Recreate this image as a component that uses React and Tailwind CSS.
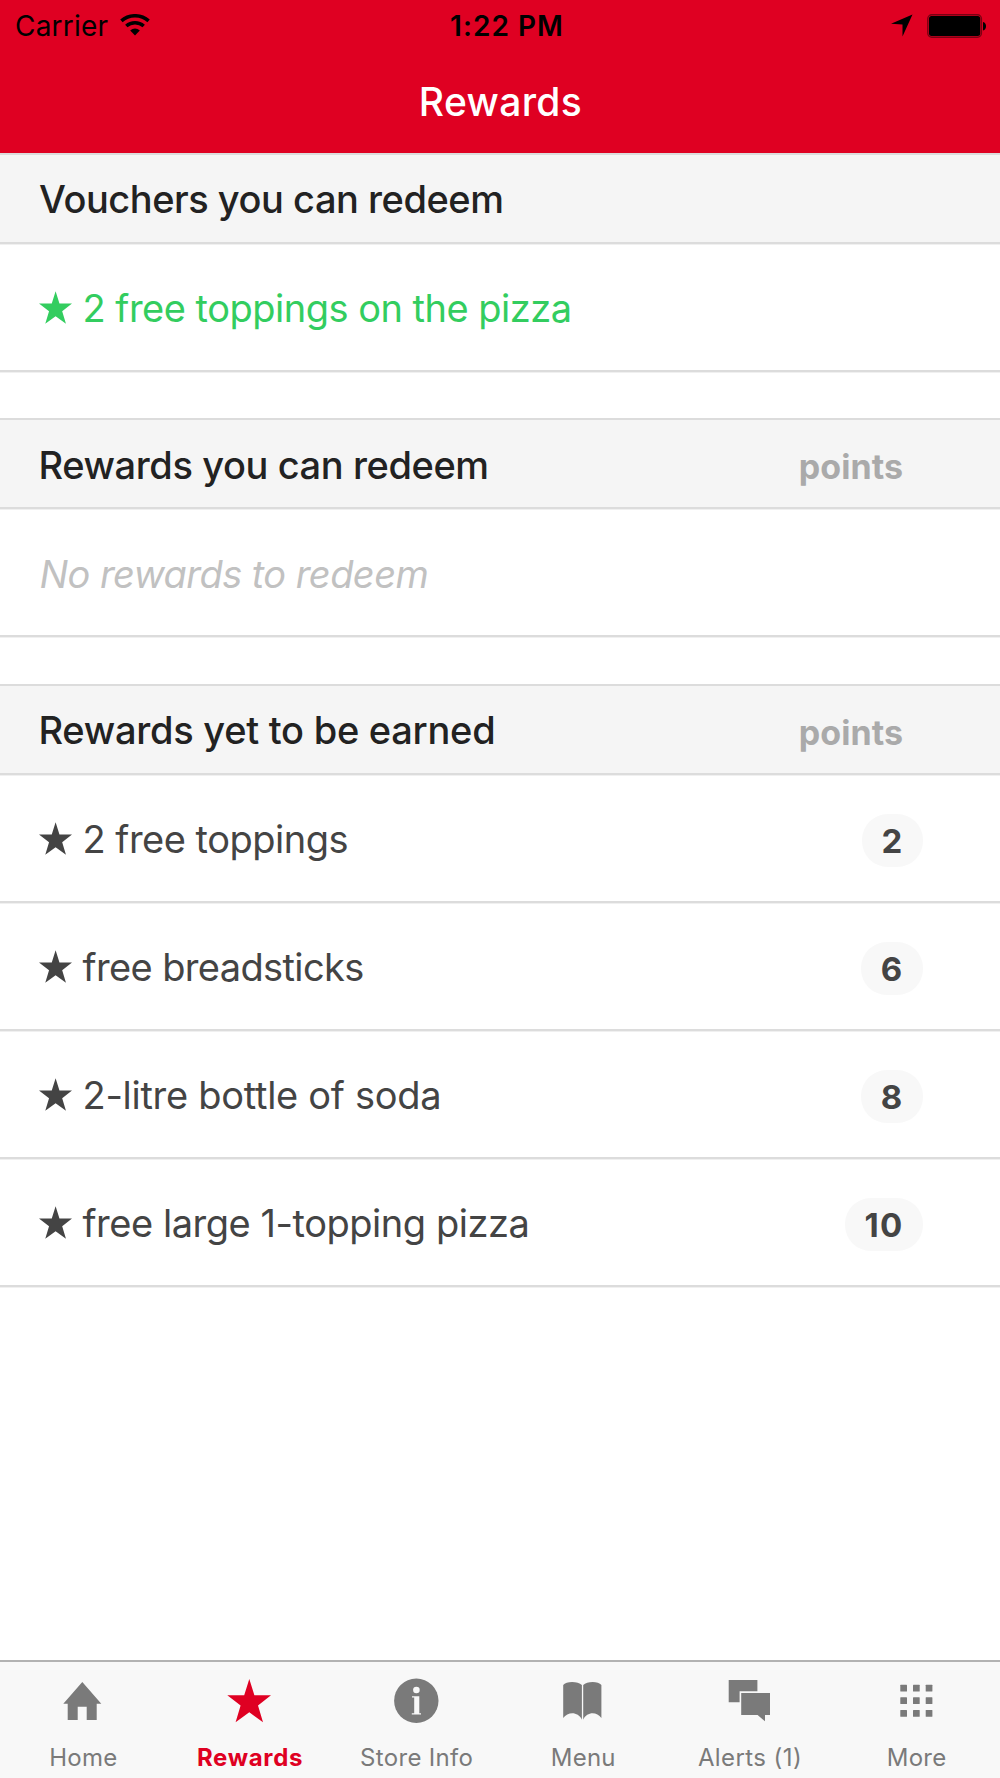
import React from 'react';

const STAR = 'M23.3 3 28.4 19.3H45L32 29.6 37 46.3 23.3 36.3 9.6 46.3 14.6 29.6 1.3 19.3H18.2Z';

const StarIcon = ({ className }) => (
  <svg viewBox="1.3 3 43.7 43.3" className={className} fill="currentColor">
    <path d={STAR} />
  </svg>
);

const WifiIcon = () => (
  <svg viewBox="0 0 30 22" className="w-[30px] h-[22px]" fill="none" stroke="currentColor" strokeWidth="3.5">
    <path d="M1.4 6.9C9 .0 21 .0 28.6 6.9" />
    <path d="M6.3 12C11.2 7.6 18.8 7.6 23.7 12" />
    <path d="M15 21.5 10.2 16.5C13 13.7 17 13.7 19.8 16.5Z" fill="currentColor" stroke="none" />
  </svg>
);

const StatusBar = () => (
  <div className="grid grid-cols-3 items-center h-[50px] text-[28px] leading-[50px] text-black">
    <div className="flex items-center pt-px pl-[15px] tracking-[0.2px]">
      Carrier
      <span className="ml-[12px] -mt-[3px]"><WifiIcon /></span>
    </div>
    <div className="text-center pt-px pl-[14px] font-semibold tracking-[1.05px]">1:22 PM</div>
    <div className="flex items-center justify-end pr-[13px]">
      <svg viewBox="0 0 22 23" className="w-[22px] h-[23px] mr-[14px]" fill="currentColor">
        <path d="M21.5.5 11.5 22.5V10.5L0 9.7Z" />
      </svg>
      <svg viewBox="0 0 60 24" className="w-[60px] h-[24px]">
        <rect x=".8" y=".8" width="53.6" height="22.4" rx="4" fill="none" stroke="#7a0012" strokeWidth="1.4" />
        <rect x="2" y="2" width="51.2" height="20" rx="2.5" fill="#000" />
        <path d="M56 8C60 8.6 60 15.8 56 16.4Z" fill="#000" />
      </svg>
    </div>
  </div>
);

const sections = [
  {
    title: 'Vouchers you can redeem',
    titleClass: 'pl-[39px] tracking-[-0.47px]',
    gap: 'mb-[46px]',
    rows: [{ label: '2 free toppings on the pizza', color: 'text-[#33cd5f]', labelClass: 'pl-[11px] tracking-[-0.5px]' }],
  },
  {
    title: 'Rewards you can redeem',
    titleClass: 'pt-px pl-[38.5px] tracking-[-0.4px]',
    gap: 'mb-[47px]',
    points: true,
    empty: 'No rewards to redeem',
    rows: [],
  },
  {
    title: 'Rewards yet to be earned',
    titleClass: 'pl-[38.5px] tracking-[-0.26px]',
    gap: '',
    points: true,
    rows: [
      { label: '2 free toppings', points: 2, color: 'text-[#444]', labelClass: 'pl-[11px] tracking-[-0.5px]' },
      { label: 'free breadsticks', points: 6, color: 'text-[#444]', labelClass: 'pl-[11px] tracking-[-0.62px]' },
      { label: '2-litre bottle of soda', points: 8, color: 'text-[#444]', labelClass: 'pl-[11px] tracking-[-0.28px]' },
      { label: 'free large 1-topping pizza', points: 10, color: 'text-[#444]', labelClass: 'pl-[11px] tracking-[-0.46px]' },
    ],
  },
];

const Section = ({ section }) => (
  <section className={section.gap}>
    <div className="flex items-center justify-between h-[91px] pt-[2px] pr-[97px] bg-[#f5f5f5] border-y-2 border-[#dcdcdc] shadow-[0_1px_0_#f0f0f0]">
      <h2 className={`text-[38px] font-medium text-[#222] ${section.titleClass}`}>{section.title}</h2>
      {section.points && (
        <span className="pt-[3px] text-[34px] font-bold text-[#aaa] tracking-[0.05px]">points</span>
      )}
    </div>
    {section.empty && (
      <div className="flex items-center h-[128px] pt-[4px] pl-[39.5px] border-b-2 border-[#dcdcdc] shadow-[0_1px_0_#f0f0f0] text-[38px] italic text-[#c1c1c1] tracking-[-0.56px]">
        {section.empty}
      </div>
    )}
    {section.rows.map((row) => (
      <div
        key={row.label}
        className={`flex items-center h-[128px] pt-[2px] pl-[38.5px] pr-[77px] border-b-2 border-[#dcdcdc] shadow-[0_1px_0_#f0f0f0] ${row.color}`}
      >
        <StarIcon className="w-[33px] h-[33px] mb-[2px]" />
        <span className={`text-[38px] ${row.labelClass}`}>{row.label}</span>
        {row.points && (
          <span className="ml-auto mt-[3px] h-[53px] pl-[20px] pr-[19.5px] rounded-[26px] bg-[#f8f8f8] text-[33px] leading-[54px] font-bold tracking-[1.2px]">
            {row.points}
          </span>
        )}
      </div>
    ))}
  </section>
);

const tabs = [
  {
    label: 'Home',
    tracking: 'tracking-[0.25px]',
    icon: <path d="M23.3 6 42.3 27.7H37.7V44H27.7V30.7H18.7V44H8.7V27.7H4.3Z" />,
  },
  {
    label: 'Rewards',
    active: true,
    tracking: 'tracking-[0.66px]',
    icon: <path d={STAR} />,
  },
  {
    label: 'Store Info',
    tracking: 'tracking-[0.32px]',
    icon: (
      <>
        <circle cx="23.3" cy="24.7" r="22.2" />
        <circle cx="23.4" cy="14" r="3.3" fill="#f8f8f8" />
        <path d="M19 20.3H26.3V37.2H28V38.6H18.8V37.2H21.2V21.6H19Z" fill="#f8f8f8" />
      </>
    ),
  },
  {
    label: 'Menu',
    tracking: 'tracking-[0.22px]',
    icon: (
      <>
        <path d="M4.2 9C7 5 19 5 22.9 9V43.7C19 35.5 9 35.5 4.2 42Z" />
        <path d="M24.2 9C28 5 39.5 5 42.4 9V42C37.8 35.5 28 35.5 24.2 43.7Z" />
      </>
    ),
  },
  {
    label: 'Alerts (1)',
    tracking: 'tracking-[0.41px]',
    icon: (
      <>
        <path d="M2.7 4H31.4V15.2H13.6V26.3H2.7Z" />
        <path d="M15.2 17H44V39H39V45.3L31.6 39H15.2Z" />
      </>
    ),
  },
  {
    label: 'More',
    tracking: 'tracking-[0.26px]',
    icon: [8.7, 21.3, 34].map((y) =>
      [7.3, 20, 32.7].map((x) => <rect key={`${x}-${y}`} x={x} y={y} width="6.7" height="6.7" rx=".5" />)
    ),
  },
];

const TabBar = () => (
  <nav className="grid grid-cols-6 h-[118px] pt-[14px] bg-[#f8f8f8] border-t-2 border-[#b2b2b2]">
    {tabs.map((tab) => (
      <div
        key={tab.label}
        className={`flex flex-col items-center ${tab.active ? 'text-[#df0022] font-bold' : 'text-[#7a7a7a]'}`}
      >
        <svg viewBox="0 0 48 48" className="w-12 h-12" fill="currentColor">
          {tab.icon}
        </svg>
        <span className={`mt-[20px] text-[24px] leading-[28px] whitespace-nowrap ${tab.tracking}`}>{tab.label}</span>
      </div>
    ))}
  </nav>
);

export default function App() {
  return (
    <div className="flex flex-col w-[1000px] h-[1778px] overflow-hidden bg-white font-[Inter,sans-serif]">
      <header className="h-[153px] bg-[#df0022]">
        <StatusBar />
        <h1 className="text-center text-[39px] leading-[103px] font-medium text-white tracking-[0.35px] pl-px">Rewards</h1>
      </header>
      <main className="flex-1">
        {sections.map((section) => (
          <Section key={section.title} section={section} />
        ))}
      </main>
      <TabBar />
    </div>
  );
}
